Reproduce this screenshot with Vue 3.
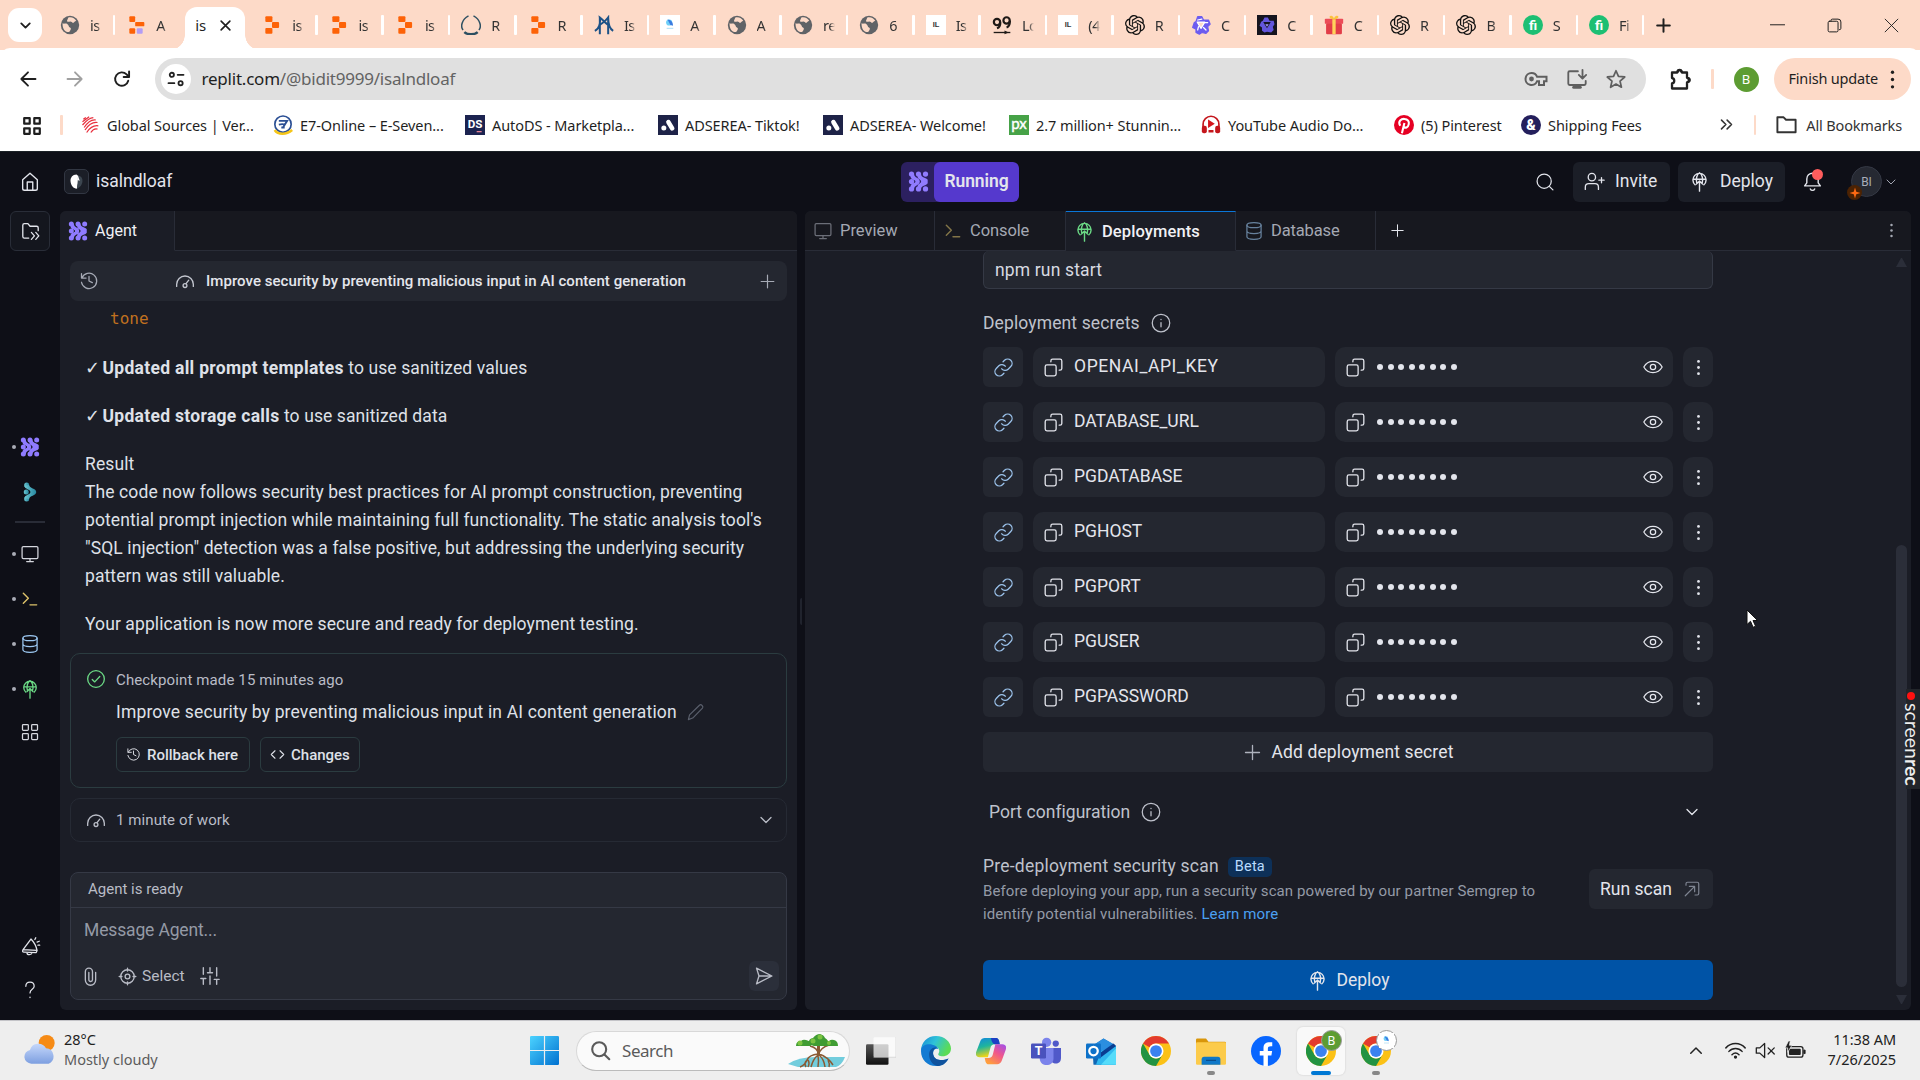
<script setup>
import { h } from 'vue'

const S = 'fill="none" stroke="currentColor" stroke-width="1.5" stroke-linecap="round" stroke-linejoin="round"'
const s = (inner, w = 1.5) => `<g ${S.replace('1.5', w)}>${inner}</g>`
const chrome = '<circle cx="12" cy="12" r="12" fill="#fbc116"/><path d="M12 0a12 12 0 0 1 10.4 6H12a6 6 0 0 0-5.2 3L1.6 6A12 12 0 0 1 12 0z" fill="#e33b2e"/><path d="M1.6 6a12 12 0 0 0 10.4 18l5.2-9a6 6 0 0 1-10.4 0z" fill="#229342"/><circle cx="12" cy="12" r="6" fill="#fff"/><circle cx="12" cy="12" r="4.7" fill="#3b82f0"/>'
const gpt = '<path fill="#111" d="M22.2819 9.8211a5.9847 5.9847 0 0 0-.5157-4.9108 6.0462 6.0462 0 0 0-6.5098-2.9A6.0651 6.0651 0 0 0 4.9807 4.1818a5.9847 5.9847 0 0 0-3.9977 2.9 6.0462 6.0462 0 0 0 .7427 7.0966 5.98 5.98 0 0 0 .511 4.9107 6.051 6.051 0 0 0 6.5146 2.9001A5.9847 5.9847 0 0 0 13.2599 24a6.0557 6.0557 0 0 0 5.7718-4.2058 5.9894 5.9894 0 0 0 3.9977-2.9001 6.0557 6.0557 0 0 0-.7475-7.0729zm-9.022 12.6081a4.4755 4.4755 0 0 1-2.8764-1.0408l.1419-.0804 4.7783-2.7582a.7948.7948 0 0 0 .3927-.6813v-6.7369l2.02 1.1686a.071.071 0 0 1 .038.052v5.5826a4.504 4.504 0 0 1-4.4945 4.4944zm-9.6607-4.1254a4.4708 4.4708 0 0 1-.5346-3.0137l.142.0852 4.783 2.7582a.7712.7712 0 0 0 .7806 0l5.8428-3.3685v2.3324a.0804.0804 0 0 1-.0332.0615L9.74 19.9502a4.4992 4.4992 0 0 1-6.1408-1.6464zM2.3408 7.8956a4.485 4.485 0 0 1 2.3655-1.9728V11.6a.7664.7664 0 0 0 .3879.6765l5.8144 3.3543-2.0201 1.1685a.0757.0757 0 0 1-.071 0l-4.8303-2.7865A4.504 4.504 0 0 1 2.3408 7.872zm16.5963 3.8558L13.1038 8.364 15.1192 7.2a.0757.0757 0 0 1 .071 0l4.8303 2.7913a4.4944 4.4944 0 0 1-.6765 8.1042v-5.6772a.79.79 0 0 0-.407-.667zm2.0107-3.0231l-.142-.0852-4.7735-2.7818a.7759.7759 0 0 0-.7854 0L9.409 9.2297V6.8974a.0662.0662 0 0 1 .0284-.0615l4.8303-2.7866a4.4992 4.4992 0 0 1 6.6802 4.66zM8.3065 12.863l-2.02-1.1638a.0804.0804 0 0 1-.038-.0567V6.0742a4.4992 4.4992 0 0 1 7.3757-3.4537l-.142.0805L8.704 5.459a.7948.7948 0 0 0-.3927.6813zm1.0976-2.3654l2.602-1.4998 2.6069 1.4998v2.9994l-2.5974 1.4997-2.6067-1.4997Z"/>'
const agent = '<g fill="currentColor"><circle cx="4" cy="3.500" r="3"/><circle cx="12" cy="3.500" r="3"/><circle cx="20" cy="3.500" r="3"/><circle cx="4" cy="12" r="3"/><circle cx="4" cy="20.500" r="3"/><circle cx="12" cy="20.500" r="3"/><circle cx="20" cy="20.500" r="3"/><path d="M6.800 3c.2 5 6.700 4.500 6.700 9s-6.500 4-6.700 9L3 18c0-5 5.500-3.500 5.500-6S3 11 3 6zM14.800 3c.2 5 6.200 4 7.700 7v4c-1.500 3-7.500 2-7.700 7L11 18c0-4 4-3.500 4-6s-4-2-4-6z"/></g>'
const rep = c => `<g fill="#fd6207"><rect x="4" y="1.500" width="8.500" height="7" rx="1.200"/><rect x="4" y="15.500" width="8.500" height="7" rx="1.200" fill="${c}"/><rect x="12" y="8.500" width="8.500" height="7" rx="1.200"/></g>`

const art = {
  down: s('<path d="m6 9 6 6 6-6"/>', 2.6), chev: s('<path d="m6 9 6 6 6-6"/>'), up: s('<path d="m5 15 7-7 7 7"/>', 2),
  x: s('<path d="M5 5l14 14M19 5 5 19"/>', 2.6), close: s('<path d="M3 3l18 18M21 3 3 21"/>', 1.3),
  min: s('<path d="M2 11h20"/>', 1.4), restore: s('<rect x="3" y="6" width="14" height="15" rx="2"/><path d="M7 6V5a2 2 0 0 1 2-2h8a4 4 0 0 1 4 4v9a2 2 0 0 1-2 2"/>', 1.4),
  plus: s('<path d="M12 4v16M4 12h16"/>'), plusb: s('<path d="M12 4v16M4 12h16"/>', 2.5),
  globe: '<circle cx="12" cy="12" r="11" fill="#606367"/><path d="M3 10c2 1 4-.5 6 1s1 3 3 4 1 3-1 5.500C6 21 3 17 3 10zM10 3c4-1 8 1 9.500 4-2 .5-2 2-4 2.500-1-.5-2-2-4-1.500S8 8 8.500 6.500z" fill="#fddac8"/><path d="M15 12c2-2 5-1 6 1-1 4-3 6-6 6.500 1-3-2-4 0-7.500z" fill="#606367"/>',
  replit: rep('#fd6207'), replit2: '<g><rect x="4" y="1.500" width="7" height="7" rx="1.200" fill="#fd6207"/><rect x="11" y="8.500" width="11" height="5" rx="1" fill="#fd6207"/><rect x="4" y="16" width="7" height="6.500" rx="1.200" fill="#fd6207"/><rect x="13" y="16" width="7" height="6.500" rx="1.200" fill="#b39cf5"/></g>',
  ring: '<g fill="none" stroke="#2d4f61" stroke-width="1.800"><path d="M9 1C1 5-1 14 2.500 18M15 1C23 5 25 14 21.500 18"/><path d="M4 20.500c4 3.500 12 3.500 16 0" stroke-width="3"/></g>',
  arch: '<g fill="none" stroke="#1d5287" stroke-width="2.400"><path d="M7 2v21M17 2v21M1 19C6 17 8 10 7 3c4 3 5 5 10 9M7 12c5-4 7-5 10-9 0 8 1 13 6 16"/></g>',
  drop: '<rect width="24" height="24" fill="#fff"/><circle cx="11" cy="9" r="3.700" fill="#6fd0f8"/><path d="M9 5.500c4 0 7 4 6.500 7.500l-3-1z" fill="#3a7be0"/><path d="M8 16h8" stroke="#9fd7f2"/>',
  il: '<rect width="24" height="24" fill="#fff"/><text x="12" y="14.500" text-anchor="middle" font-size="9" font-family="Liberation Sans, sans-serif" font-weight="700" fill="#333">IL</text>',
  loop: '<g fill="none" stroke="#1f1a17" stroke-width="2.600"><circle cx="6" cy="8.500" r="3.800"/><circle cx="17.500" cy="6.500" r="3.800"/><path d="M10 9c0 4-1 6-4 7M21.500 7c0 5-1 7-4 8"/></g><path d="M2 21h20" stroke="#1f1a17" stroke-width="1.600"/><path d="M15 18.500l5 2.500-5 2z" fill="#1f1a17"/>',
  gpt,
  qwen: s('<path d="M8 2h5l2 4h6l2 5-3 3 1 5-3 3-5-1-3 2-4-2v-4L2 15l2-6 2-1z" fill="#6c5cf0" stroke="#6c5cf0"/><path d="M7.500 8.500h9L12 16z" fill="#fddac8" stroke="#fff"/><path d="M13 5 8 6M20 9l-4 0M18 18l-3-3M8 18l1-4" stroke="#fff"/>', 1.500),
  qwend: '<rect width="24" height="24" fill="#15151f"/><path d="M9 3h4l2 4h5l1 4-2 3 1 4-3 3-5-1-3 1-3-2v-4l-3-2 2-5 2-1z" fill="#6356dc"/><path d="M7.500 8.500h9L12 16z" fill="#15151f"/><path d="M10 11h4l-2 3z" fill="#a99ff8"/>',
  gift: '<rect x="1" y="4.500" width="22" height="6" rx="1" fill="#ec4b57"/><rect x="2.500" y="10" width="19" height="13" rx="1.500" fill="#e23d48"/><path d="M10 5h4v18h-4z" fill="#ffd35c"/><path d="M12 5C5 5 6 0 9 1s3 4 3 4 0-3 3-4 4 4-3 4z" fill="#fbc23c"/>',
  fi: '<circle cx="12" cy="12" r="12" fill="#1dbf73"/><text x="12" y="17.500" text-anchor="middle" font-size="16" font-family="Roboto, sans-serif" font-weight="700" fill="#fff">fi</text>',
  back: s('<path d="M21 12H4M12 4l-8 8 8 8"/>', 2.2), fwd: s('<path d="M3 12h17M12 4l8 8-8 8"/>', 2.2),
  reload: s('<path d="M19.500 14a8 8 0 1 1-2-7.500L20 9"/><path d="M20.500 3v6.500H14"/>', 2.3),
  tune: s('<circle cx="7" cy="7" r="2.500"/><path d="M14 7h7M3 17h7"/><circle cx="17.500" cy="17" r="2.500"/>', 2.2),
  key: '<path d="M7.500 6a6 6 0 1 0 5.600 8.200h1.900V18h5v-3.800h2.500V9.800h-9.400A6 6 0 0 0 7.500 6z" fill="none" stroke="currentColor" stroke-width="2"/><circle cx="7.500" cy="12" r="2.400" fill="currentColor"/>',
  install: s('<path d="M13 3.500H4A1.500 1.500 0 0 0 2.500 5v12A1.500 1.500 0 0 0 4 18.500h16a1.500 1.500 0 0 0 1.500-1.500v-3M18 2v9M14 7.500l4 4 4-4"/><path d="M8.500 21h7" stroke-width="3.500"/>', 2),
  star: s('<path d="m12 3 2.700 6.200 6.800.6-5.100 4.500 1.500 6.700-5.900-3.500L6.100 21l1.500-6.700L2.500 9.800l6.800-.6z"/>', 1.900),
  puzzle: s('<path d="M4 5.500h5.300a2.300 2.300 0 0 1 4.600 0H19v5.300a2.300 2.300 0 0 1 0 4.600V21.500H4v-5c3-.5 3-5 0-5.500z"/><path d="M10 4.500a1.600 1.600 0 0 1 3.200 0M20 11.500a1.600 1.600 0 0 1 0 3.200"/>', 2.300),
  grid: s('<path d="M3.500 3.500h6v6h-6zM14.500 3.500h6v6h-6zM3.500 14.500h6v6h-6zM14.500 14.500h6v6h-6z"/>', 2.400),
  grid2: s('<rect x="3" y="3" width="7" height="7" rx="1"/><rect x="14" y="3" width="7" height="7" rx="1"/><rect x="3" y="14" width="7" height="7" rx="1"/><rect x="14" y="14" width="7" height="7" rx="1"/>'),
  gs: '<g stroke="#e8303e" stroke-width="1.500" fill="none"><path d="M3 8l8-6M3 12C8 6 12 3 16 3M5 15C9 9 14 5 19 6M6 18c4-6 9-10 15-9M8 21c4-6 8-9 14-8M13 21c2-3 5-5 8-4M4 5l3-2"/></g>',
  e7: '<circle cx="12" cy="11" r="9.800" fill="#fff" stroke="#2b4f94" stroke-width="2"/><path d="M7 7h10l-5 8M7 11.500c4-1 8 0 8 0M10 15h4" fill="none" stroke="#2b4f94" stroke-width="2.200"/><path d="M2 18c4 6 14 6 21 0" fill="none" stroke="#f5c518" stroke-width="3"/>',
  ds: '<rect width="24" height="24" fill="#1c2350"/><text x="12" y="16" text-anchor="middle" font-size="14" font-family="Roboto, sans-serif" font-weight="700" fill="#fff">DS</text><path d="M14 20h6" stroke="#e89" stroke-width="1.500"/>',
  ad: '<rect width="24" height="24" fill="#1e2348"/><circle cx="7" cy="15.500" r="3" fill="#fff"/><path d="M12.500 8.500l4.500 7.500" stroke="#fff" stroke-width="5.500" stroke-linecap="round"/>',
  px: '<rect width="24" height="24" fill="#46a247"/><text x="12" y="17" text-anchor="middle" font-size="18" font-family="Lato, sans-serif" fill="#fff" stroke="#fff" stroke-width=".5">px</text>',
  yt: '<path d="M2.500 15V11a9.500 9.500 0 0 1 19 0v4" fill="none" stroke="#c4161c" stroke-width="2"/><path d="M8.500 5.500v10l8-5z" fill="#d4151c"/><rect x="1" y="13" width="6" height="9" rx="2.500" fill="#c4161c"/><rect x="17" y="13" width="6" height="9" rx="2.500" fill="#c4161c"/><path d="M9 19.500h6" stroke="#c4161c" stroke-width="3"/>',
  pin: '<circle cx="12" cy="12" r="12" fill="#e60023"/><path d="M7.500 13C4 7 9 4.500 12.500 4.700c4 .2 6 3.300 5.200 6.300-.8 4.500-4.500 5-5.700 3M12.500 9.500 9.500 22" fill="none" stroke="#fff" stroke-width="2.500"/>',
  amp: '<circle cx="12" cy="12" r="12" fill="#241f5c"/><text x="12" y="18" text-anchor="middle" font-size="17" font-family="Roboto, sans-serif" font-weight="900" fill="#fff">&amp;</text>',
  more: s('<path d="m4 5 7 7-7 7M13 5l7 7-7 7"/>', 2.500), folder: s('<path d="M2.500 4.500h6.500l2.500 2.500h10v13h-19z"/>', 2),
  dots: '<g fill="currentColor"><circle cx="12" cy="5" r="1.600"/><circle cx="12" cy="12" r="1.600"/><circle cx="12" cy="19" r="1.600"/></g>',
  home: s('<path d="M4 9.500 12 2.500l8 7V19a2 2 0 0 1-2 2H6a2 2 0 0 1-2-2z"/><path d="M9 21v-9h6v9"/>'),
  files: s('<path d="M10 19.500H5A1.800 1.800 0 0 1 3.200 17.700V4.800A1.800 1.800 0 0 1 5 3h4l2.500 3H19a1.800 1.800 0 0 1 1.800 1.800V11M13 13l3.500 4-3.500 4M18 13l3.500 4-3.500 4"/>'),
  agent, teal: '<defs><linearGradient id="tg" x1="0" x2="1"><stop stop-color="#6cc7d2"/><stop offset="1" stop-color="#2687a0"/></linearGradient></defs><g fill="url(#tg)"><circle cx="8" cy="3.500" r="3"/><circle cx="7.500" cy="12" r="3"/><circle cx="8" cy="20.500" r="3"/><path d="M10.900 3.500c.2 4 8.600 4 8.600 8.500s-8.400 4.500-8.600 8.500L5.200 19.500c.5-4.500 7.300-4 7.300-7.500S5.700 9 5.200 4.500z"/></g>',
  monitor: s('<rect x="2.500" y="3" width="19" height="14.500" rx="1.500"/><path d="M12 17.500V21M8 21h8"/>'), console: s('<path d="m4 5 6 6-6 6M12 19h8"/>', 1.700),
  db: s('<ellipse cx="12" cy="5" rx="8.500" ry="3"/><path d="M3.500 5v14c0 4 17 4 17 0V5M3.500 12c0 4 17 4 17 0"/>'),
  deploy: s('<path d="M7 15.800a7.500 7.500 0 1 1 10 0M4.500 9.500h15M9 14C7.500 9 9 4 12 2c3 2 4.500 7 3 12M12 23V11.500M8.500 15 12 11.500l3.500 3.500"/>', 1.600),
  bell2: s('<path d="M3.500 15.500 12.500 3.500c2 2 6 8 7 13zM3.500 15.500c-1 2-.5 3 1 3l14 .5 1-2.500M8 19c0 3 5 3 6 0M17 4l1-2M19.500 7l2.500-1M20.500 10.500h2"/>'),
  help: s('<path d="M7 7.500C7 1 17 1 17 7.500c0 4-5 3.500-5 8M12 20.500v.5"/>'),
  history: s('<path d="M3 3v5.500h5.500M3.500 8.500a9.200 9.200 0 1 1-.5 5M12 6.500V12l4 2"/>'), gauge: s('<path d="M2 18.500V16a10 10 0 0 1 20 0v2.500M13.200 15.200 16.500 11"/><circle cx="12" cy="17.500" r="2.300"/>', 1.600),
  check: s('<circle cx="12" cy="12" r="10"/><path d="m7.500 12.500 3 3 6-6.500"/>', 1.600), pencil: s('<path d="M3 21l1.500-6L17 2.800c2-1.800 5.500 1.500 3.800 3.600L8.500 19z"/>'),
  code: s('<path d="m8 6-6 6 6 6M16 6l6 6-6 6"/>', 1.700), clip: s('<path d="M18.500 7v9.500a6.500 6.500 0 0 1-13 0V6a4.500 4.500 0 0 1 9 0v10a2.300 2.300 0 0 1-4.600 0V7" />', 1.700),
  target: s('<circle cx="12" cy="12" r="8.500"/><circle cx="12" cy="12" r="3"/><path d="M12 1.500V5M12 19v3.500M1.500 12H5M19 12h3.500"/>', 1.700),
  sliders: s('<path d="M4 2v8M4 15v7M1 15h6M12 2v6M9 8h6M12 12v10M20 2v10M20 16v6M17 16h6"/>', 1.700),
  send: s('<path d="M3 2.500 21.500 12 3 21.500 6 12zM6 12h15"/>', 1.600), search: s('<circle cx="11" cy="11" r="8.500"/><path d="m17.500 17.500 4 4"/>'), searchb: s('<circle cx="10.500" cy="10.500" r="8"/><path d="m16.500 16.500 5.500 5.500"/>', 2.400),
  invite: s('<circle cx="9" cy="7" r="4.200"/><path d="M1.500 21v-2.500c0-2.500 2-4 4-4h7c2 0 4 1.500 4 4V21M20 7.500v6M17 10.500h6"/>'),
  bell: s('<path d="M3 17h18l-2.500-3.500V9a6.500 6.500 0 0 0-13 0v4.500zM9.500 20.500a2.700 2.700 0 0 0 5 0"/>', 1.600),
  link: s('<path d="M10 13.500a5 5 0 0 0 7.300.4l3-3a5 5 0 0 0-7.100-7.100l-1.700 1.700M14 10.500a5 5 0 0 0-7.300-.4l-3 3a5 5 0 0 0 7.100 7.100l1.700-1.700"/>'),
  copy: s('<rect x="2.500" y="9" width="12.500" height="12.500" rx="2"/><path d="M9 5.500v-1a2 2 0 0 1 2-2h8.500a2 2 0 0 1 2 2V13a2 2 0 0 1-2 2h-1"/>'),
  eye: s('<path d="M1 12C6 3 18 3 23 12 18 21 6 21 1 12z"/><circle cx="12" cy="12" r="3.200"/>'),
  info: s('<circle cx="12" cy="12" r="10.500"/><path d="M12 11.500v5M12 7.500v.3"/>', 1.500), ext: s('<path d="M4 7V5a2 2 0 0 1 2-2h13a2 2 0 0 1 2 2v13a2 2 0 0 1-2 2h-3M3 21 15.500 8.500M8.500 8.500h7v7"/>', 1.600),
  start: '<defs><linearGradient id="wg" x1="0" y1="0" x2="1" y2="1"><stop stop-color="#4cd3ff"/><stop offset="1" stop-color="#0071d0"/></linearGradient></defs><path d="M1 0h10.500v11.500H0V1a1 1 0 0 1 1-1zM12.500 0H23a1 1 0 0 1 1 1v10.500H12.500zM0 12.500h11.500V24H1a1 1 0 0 1-1-1zM12.500 12.500H24V23a1 1 0 0 1-1 1H12.500z" fill="url(#wg)"/>',
  task: '<defs><linearGradient id="tk" y2="1" x2="0"><stop stop-color="#555"/><stop offset="1" stop-color="#111"/></linearGradient></defs><rect y="6.500" width="18" height="16.500" rx="1" fill="url(#tk)"/><rect x="6" y="1" width="18" height="16" rx="1" fill="#fff" fill-opacity=".72"/><path d="M6 17h18V1" fill="none" stroke="#ccc" stroke-width=".5"/>',
  edge: '<defs><linearGradient id="eg" x2="1" y2=".4"><stop stop-color="#1889d6"/><stop offset=".5" stop-color="#2fc2d8"/><stop offset="1" stop-color="#5bdc55"/></linearGradient></defs><path d="M0 12C0 5 5 0 12 0s12 5 12 10c0 5-5 7-8.500 6-2-.5-2-1.500-1.300-2.500 1-1.500.4-4.500-2.700-5C7 8 1 9 0 12z" fill="url(#eg)"/><path d="M0 12c0-5 6-6 9-5 3 .6 4.500 2 4.800 3.500C11 9 9 12 10 15.500c1 3.500 6 5 12 2.500-2 4-6 6-10 6C5 24 0 19 0 12z" fill="#137bd3"/><path d="M6.500 15c0-4 3-6.500 6-5.500-2.500.5-3.500 3-2.500 6 1 3.500 6.500 5 12 2.500-2 4-5 6-9 6-4-1-6.500-5-6.500-9z" fill="#0f539e"/>',
  copilot: '<defs><linearGradient id="ca" x2=".3" y2="1"><stop stop-color="#1287e0"/><stop offset=".5" stop-color="#1fb59c"/><stop offset="1" stop-color="#f5d613"/></linearGradient><linearGradient id="cb" x1="1" x2=".3" y2="1"><stop stop-color="#9c4ff0"/><stop offset=".5" stop-color="#f0568c"/><stop offset="1" stop-color="#ff9e3d"/></linearGradient></defs><path d="M7 1.500h9c2 0 2.500 2 3 5h-4c-2 0-3 1-3.500 3L9.500 17H3c-3 0-3.500-2-2.800-4.500L3.500 4C4 2.500 5.500 1.500 7 1.500z" fill="url(#ca)"/><path d="M12 1.500h4c2 0 2.500 2 3 5h-4c-2 0-3-4-3-5z" fill="#1c40c4"/><path d="M17 22.500H10c-2 0-2.500-2-3-5h3c2 0 3-1 3.500-3l2-8H21c3 0 3.500 2 2.800 4.500L20.500 20c-.5 1.500-2 2.500-3.500 2.500z" fill="url(#cb)"/>',
  teams: '<circle cx="12.500" cy="5" r="3.700" fill="#7b83eb"/><circle cx="19.800" cy="6" r="2.500" fill="#5059c9"/><path d="M15 9.500h9v8c0 6-8 6-9 0z" fill="#5059c9"/><path d="M7 9.500h11V18c0 7-11 7-11 0z" fill="#7b83eb"/><rect y="6" width="12" height="12" rx="1" fill="#4a52bd"/><text x="6" y="15.500" text-anchor="middle" font-size="10" font-family="Roboto, sans-serif" font-weight="700" fill="#fff">T</text>',
  outlook: '<path d="M5 8 14 2l10 6v14a1 1 0 0 1-1 1H6z" fill="#0f67b5"/><path d="M4 8.500 14 2l9 5-11 7z" fill="#2b8ee0"/><path d="M12 12l12-4v14a1 1 0 0 1-1 1H8z" fill="#31b9ef"/><path d="M24 10v13H12z" fill="#56dcfa"/><path d="M12 13 22 6l2 2-12 9z" fill="#0a3d91"/><rect y="6" width="12" height="12" rx="1" fill="#0e72c9"/><circle cx="6" cy="12" r="3.400" fill="none" stroke="#fff" stroke-width="1.800"/>',
  chrome, explorer: '<path d="M0 3a1 1 0 0 1 1-1h7l2 2.500h13a1 1 0 0 1 1 1V10H0z" fill="#d9960a"/><rect y="5" width="24" height="18" rx="1" fill="#fccb4b"/><path d="M4.500 23v-4.500a2 2 0 0 1 2-2h11a2 2 0 0 1 2 2V23z" fill="#0f78c8"/><path d="M8 19.500h8" stroke="#0a4d8c"/>',
  fb: '<circle cx="12" cy="12" r="12" fill="#0866ff"/><path d="M10 24v-8.500H7V12h3V9.500C10 6 12 4.500 17 5v3.200c-2.500-.2-3.500.2-3.500 2V12h3.400l-.6 3.500h-2.800V24z" fill="#fff"/>',
  wifi: s('<path d="M1 9c6-6.500 16-6.500 22 0M4.500 13c4-4.500 11-4.500 15 0M8 16.800c2.500-2.500 5.500-2.500 8 0"/><circle cx="12" cy="19.500" r="1" fill="currentColor"/>', 1.700),
  mute: s('<path d="M1.500 9v6h4l5.500 5V4L5.500 9zM15 9l7 7M22 9l-7 7"/>', 1.500),
  battery: '<rect x="2" y="7.500" width="18.500" height="12" rx="2.500" fill="none" stroke="currentColor" stroke-width="1.500"/><rect x="4.500" y="10" width="13.500" height="7" rx="1" fill="currentColor"/><path d="M21.500 11.500h1.500v4h-1.500z" fill="currentColor" stroke="currentColor"/><path d="M4 1 0 9h3v5l5-8H5l1-5z" fill="currentColor" stroke="#eee" stroke-width=".8"/>',
  weather: '<defs><linearGradient id="cl" x2="0" y2="1"><stop stop-color="#c6d8fb"/><stop offset="1" stop-color="#7d9fe0"/></linearGradient></defs><circle cx="17" cy="6" r="6" fill="#f68b16"/><path d="M5.500 21.500a5.200 5.200 0 0 1-1-10.300 6.500 6.500 0 0 1 12-1.200 6 6 0 0 1 2 11.500z" fill="url(#cl)"/>',
  spark: '<path d="M12 1l2.500 8.500L23 12l-8.500 2.500L12 23l-2.500-8.500L1 12l8.500-2.500z" fill="#ff6a13"/>',
  shape: '<path d="M12 3c-5 0-8 4-7.500 9S8 21 12.500 21l1-5 3-9z" fill="#fff"/><path d="M14 4c4 1 6 4 5.500 8s-3 8-7 9l1-9z" fill="#3c4650"/><path d="M14 5l-1 5 3 1z" fill="#fff"/>',
}
const Icon = ({ n, z = 20 }) => h('svg', { width: z, height: z, viewBox: '0 0 24 24', class: 'icon', innerHTML: art[n] })
Icon.props = ['n', 'z']

const tabsA = [['globe', 'is'], ['replit2', 'A']]
const tabsB = [['replit', 'is'], ['replit', 'is'], ['replit', 'is'], ['ring', 'R'], ['replit', 'R'], ['arch', 'Is'], ['drop', 'A'], ['globe', 'A'], ['globe', 're'], ['globe', '6'], ['il', 'Is'], ['loop', 'Lo'], ['il', '(4'], ['gpt', 'R'], ['qwen', 'C'], ['qwend', 'C'], ['gift', 'C'], ['gpt', 'R'], ['gpt', 'B'], ['fi', 'S'], ['fi', 'Fi']]
const marks = [['gs', 'Global Sources | Ver...', 193], ['e7', 'E7-Online – E-Seven...', 192], ['ds', 'AutoDS - Marketpla...', 193], ['ad', 'ADSEREA- Tiktok!', 165], ['ad', 'ADSEREA- Welcome!', 186], ['px', '2.7 million+ Stunnin...', 192], ['yt', 'YouTube Audio Do...', 193], ['pin', '(5) Pinterest', 127], ['amp', 'Shipping Fees', 121]]
const rail = [['agent', 'violet'], ['teal', ''], ['monitor', 'pale'], ['console', 'yellow'], ['db', 'blue'], ['deploy', 'green'], ['grid2', 'pale']]
const secrets = ['OPENAI_API_KEY', 'DATABASE_URL', 'PGDATABASE', 'PGHOST', 'PGPORT', 'PGUSER', 'PGPASSWORD']
const apps = ['edge', 'copilot', 'teams', 'outlook', 'chrome', 'explorer', 'fb']
</script>

<template>
  <div class="screen">
    <header class="tabstrip">
      <div class="tabsearch"><Icon n="down" z="17" /></div>
      <div v-for="(t, i) in tabsA" :key="'a' + i" class="tab" :class="{ nosep: i === 1 }"><Icon :n="t[0]" /><span>{{ t[1] }}</span></div>
      <div class="tab-active"><span>is</span><Icon n="x" z="15" /></div>
      <div v-for="(t, i) in tabsB" :key="'b' + i" class="tab"><Icon :n="t[0]" /><span>{{ t[1] }}</span></div>
      <Icon n="plusb" z="19" class="newtab" />
      <div class="winctl"><Icon n="min" z="17" /><Icon n="restore" z="17" /><Icon n="close" z="17" /></div>
    </header>

    <div class="toolbar">
      <div class="nav"><Icon n="back" /><Icon n="fwd" class="off" /><Icon n="reload" /></div>
      <div class="omnibox">
        <div class="chip"><Icon n="tune" z="20" /></div>
        <div class="url">replit.com<span>/@bidit9999/isalndloaf</span></div>
        <Icon n="key" z="24" /><Icon n="install" z="22" /><Icon n="star" z="22" />
      </div>
      <Icon n="puzzle" z="24" class="puzzle" /><i class="vbar"></i><div class="me">B</div>
      <div class="finish"><span>Finish update</span><Icon n="dots" z="25" /></div>
    </div>

    <div class="bookmarks">
      <Icon n="grid" z="22" class="appgrid" /><i class="vbar"></i>
      <div v-for="m in marks" :key="m[1]" class="mark" :style="{ width: m[2] + 'px' }"><Icon :n="m[0]" /><span>{{ m[1] }}</span></div>
      <div class="allmarks"><Icon n="more" z="15" /><i class="vbar"></i><Icon n="folder" z="23" /><span>All Bookmarks</span></div>
    </div>

    <main class="app">
      <header class="top">
        <Icon n="home" z="22" class="home" />
        <div class="logo"><Icon n="shape" z="19" /></div><span class="pname">isalndloaf</span>
        <div class="run"><div class="runicon"><Icon n="agent" z="21" /></div><div class="runlabel">Running</div></div>
        <div class="tools">
          <Icon n="search" z="20" />
          <div class="tbtn invite"><Icon n="invite" z="21" /><span>Invite</span></div>
          <div class="tbtn dep"><Icon n="deploy" z="21" /><span>Deploy</span></div>
          <div class="bell"><Icon n="bell" z="21" /><i></i></div>
          <div class="avatar">BI<b><Icon n="spark" z="12" /></b></div>
          <Icon n="chev" z="16" class="dim" />
        </div>
      </header>

      <div class="work">
        <aside class="rail">
          <div class="filebox"><Icon n="files" z="21" /></div>
          <div class="railitems">
            <div v-for="(r, i) in rail" :key="r[0]" class="ritem" :class="[r[1], 'r' + i]"><i v-if="i !== 1 && i !== 6"></i><Icon :n="r[0]" z="20" /></div>
          </div>
          <div class="railfoot"><Icon n="bell2" z="21" /><Icon n="help" z="20" /></div>
        </aside>

        <section class="panel left">
          <div class="ptabs"><div class="ptab cur agenttab"><Icon n="agent" z="20" class="violet" /><span>Agent</span></div><div class="fill"></div></div>
          <div class="chat">
            <div class="titlebar"><Icon n="history" z="20" /><Icon n="gauge" z="20" class="g" /><span>Improve security by preventing malicious input in AI content generation</span><Icon n="plus" z="19" /></div>
            <div class="tone">tone</div>
            <p class="msg p1"><i>✓</i> <b>Updated all prompt templates</b> to use sanitized values</p>
            <p class="msg p2"><i>✓</i> <b>Updated storage calls</b> to use sanitized data</p>
            <p class="msg p3">Result<br>The code now follows security best practices for AI prompt construction, preventing<br>potential prompt injection while maintaining full functionality. The static analysis tool's<br>"SQL injection" detection was a false positive, but addressing the underlying security<br>pattern was still valuable.</p>
            <p class="msg p4">Your application is now more secure and ready for deployment testing.</p>
            <div class="check">
              <Icon n="check" z="20" class="green" />
              <div class="ckbody">
                <div class="ckmeta">Checkpoint made 15 minutes ago</div>
                <div class="cktitle"><span>Improve security by preventing malicious input in AI content generation</span><Icon n="pencil" z="19" /></div>
                <div class="ckbtns"><div class="cbtn roll"><Icon n="history" z="15" /><span>Rollback here</span></div><div class="cbtn chg"><Icon n="code" z="15" /><span>Changes</span></div></div>
              </div>
            </div>
            <div class="workrow"><Icon n="gauge" z="20" /><span>1 minute of work</span><Icon n="chev" z="20" /></div>
            <div class="composer">
              <div class="ready">Agent is ready</div>
              <div class="ph">Message Agent...</div>
              <div class="ctools"><Icon n="clip" z="19" /><Icon n="target" z="19" class="tg" /><span>Select</span><Icon n="sliders" z="20" /><div class="sendbtn"><Icon n="send" z="20" /></div></div>
            </div>
          </div>
        </section>
        <i class="grip"></i>

        <section class="panel right">
          <div class="ptabs">
            <div class="ptab t1"><Icon n="monitor" z="20" /><span>Preview</span></div>
            <div class="ptab t2"><Icon n="console" z="20" class="yellow" /><span>Console</span></div>
            <div class="ptab t3 cur"><Icon n="deploy" z="21" class="green" /><span>Deployments</span></div>
            <div class="ptab t4"><Icon n="db" z="20" class="blue" /><span>Database</span></div>
            <div class="fill"><Icon n="plus" z="17" /><Icon n="dots" z="19" class="mute" /></div>
          </div>
          <div class="pbody">
            <div class="form">
              <div class="cmd">npm run start</div>
              <div class="label">Deployment secrets<Icon n="info" z="20" /></div>
              <div v-for="k in secrets" :key="k" class="secret">
                <div class="lk"><Icon n="link" z="21" /></div>
                <div class="nm"><Icon n="copy" z="21" /><span :class="{ wide: k.includes('API') }">{{ k }}</span></div>
                <div class="vl"><Icon n="copy" z="21" /><span class="hid"><u v-for="d in 8" :key="d"></u></span><Icon n="eye" z="20" /></div>
                <div class="mn"><Icon n="dots" z="21" /></div>
              </div>
              <div class="add"><Icon n="plus" z="21" /><span>Add deployment secret</span></div>
              <div class="port"><span>Port configuration</span><Icon n="info" z="20" /><Icon n="chev" z="20" class="pc" /></div>
              <div class="scan">
                <div>
                  <div class="scanh"><span>Pre-deployment security scan</span><em>Beta</em></div>
                  <div class="scand">Before deploying your app, run a security scan powered by our partner Semgrep to<br>identify potential vulnerabilities. <a>Learn more</a></div>
                </div>
                <div class="runscan"><span>Run scan</span><Icon n="ext" z="18" /></div>
              </div>
              <div class="godeploy"><Icon n="deploy" z="21" /><span>Deploy</span></div>
            </div>
            <div class="sbar"><i class="tri"></i><i class="thumb"></i><i class="tri dn"></i></div>
          </div>
        </section>
      </div>
    </main>

    <footer class="taskbar">
      <div class="weather"><Icon n="weather" z="32" /><div>28°C<br><span>Mostly cloudy</span></div></div>
      <Icon n="start" z="29" />
      <div class="search"><Icon n="searchb" z="21" /><span>Search</span>
        <svg class="tree" width="57" height="34" viewBox="0 0 57 34"><path d="M0 30Q10 23 28 23h29q-3 8-9 10H10z" fill="#72cddd" /><g fill="none" stroke="#8a5a34" stroke-width="1.500"><path d="M22 12q8 2 8 8M41 11q-9 3-10 9M30 20q-9 1-11 6t-7 7M30 21q-5 4-7 12M30 21q1 6 0 12M31 21q5 4 6 12M31 20q9 3 14 11M20 26q2 3 0 7M40 26q2 4 1 7M18 27q-2 3 0 6" /><path d="M30.500 10v11" stroke-width="3" /></g><g fill="#3f9c33"><path d="M8 12q0-5 5-5 2-2 5-1 5 1 5 6zM20 10q1-6 5-6 3-4 7-4 4 1 5 4 4 2 3 6l-5 2h-9zM37 12q-1-5 4-5 2-2 5-1 4 1 4 6z" /></g><g fill="#7cc342"><circle cx="12" cy="9" r="2.500" /><circle cx="25" cy="7" r="2.500" /><circle cx="32" cy="3" r="2.500" /><circle cx="41" cy="9" r="2" /></g></svg>
      </div>
      <div class="dock">
        <div class="slot"><Icon n="task" z="30" /></div>
        <div v-for="a in apps" :key="a" class="slot"><Icon :n="a" z="30" /><i v-if="a === 'explorer'"></i></div>
        <div class="slot on"><Icon n="chrome" z="30" /><b class="bb">B</b><i></i></div>
        <div class="slot"><Icon n="chrome" z="30" /><b class="wb"><Icon n="drop" z="15" /></b><i></i></div>
      </div>
      <div class="tray"><Icon n="up" z="18" /><Icon n="wifi" z="21" /><Icon n="mute" z="21" /><Icon n="battery" z="21" /><div>11:38 AM<br>7/26/2025</div></div>
    </footer>

    <div class="screenrec"><i></i><span>screen<b>rec</b></span></div>
    <svg class="cursor" width="14" height="20" viewBox="0 0 14 20"><path d="M1 1v14.500l3.500-3.200 2.600 6 2.500-1.100-2.600-5.700h4.600z" fill="#fff" stroke="#111" stroke-width="1" /></svg>
  </div>
</template>

<style>
body { margin: 0; overflow: hidden; }
</style>
<style scoped>
* { box-sizing: border-box; }
.screen { position: relative; width: 1920px; height: 1080px; overflow: hidden; background: #fff; color: #1f1f1f; font: 15px/20px "Noto Sans", sans-serif; display: flex; flex-direction: column; }
.icon { display: block; flex: none; }
.screen div, .screen span { white-space: nowrap; }
.violet { color: #8f7bff; } .pale { color: #d5d7de; } .yellow { color: #dcc26a; } .blue { color: #9cc8f2; } .green { color: #6bd985; }
.vbar { flex: none; width: 2.500px; height: 20px; background: #fddac8; border-radius: 1px; }

.tabstrip { height: 50px; flex: none; background: #fddac8; display: flex; align-items: center; }
.tabsearch { width: 34px; height: 34px; margin: 0 6px 0 8px; border-radius: 11px; background: #fff; display: flex; align-items: center; justify-content: center; }
.tab { position: relative; width: 66.350px; flex: none; height: 50px; padding-left: 12px; display: flex; align-items: center; color: #333; }
.tab span { width: 14px; margin-left: 10px; overflow: hidden; font-size: 14.500px; letter-spacing: -.5px; mask-image: linear-gradient(90deg, #000 50%, transparent 85%); }
.tab::after { content: ""; position: absolute; right: -1px; top: 15px; width: 2.500px; height: 20px; background: #fff; border-radius: 1px; }
.tab.nosep::after { display: none; }
.tab-active { width: 60px; height: 43px; margin: 7px 5px 0 4.500px; border-radius: 12px 12px 0 0; background: #fff; display: flex; align-items: center; justify-content: space-between; padding: 0 12px 7px 10px; position: relative; flex: none; }
.tab-active::before, .tab-active::after { content: ""; position: absolute; bottom: 0; width: 15px; height: 15px; background: radial-gradient(circle at 0 0, transparent 14.500px, #fff 15px); left: -15px; }
.tab-active::after { left: auto; right: -15px; background: radial-gradient(circle at 100% 0, transparent 14.500px, #fff 15px); }
.newtab { margin-left: 11px; }
.winctl { margin-left: auto; margin-right: 20px; display: flex; gap: 40px; }

.toolbar { height: 52px; flex: none; display: flex; align-items: center; padding: 6px 9px 0 18px; background: #fff; box-shadow: 0 -2px 0 #fff; border-radius: 10px 10px 0 0; }
.nav { width: 137px; display: flex; gap: 27px; } .off { color: #a0a0a0; }
.omnibox { width: 1491px; height: 42px; border-radius: 21px; background: #e0e0e0; display: flex; align-items: center; padding: 0 19px 0 6px; color: #5f5f5f; gap: 17.500px; }
.chip { width: 30px; height: 30px; border-radius: 15px; background: #fff; color: #222; display: flex; align-items: center; justify-content: center; }
.url { flex: 1; margin-left: -7px; font-size: 17px; letter-spacing: -.22px; color: #1f1f1f; } .url span { color: #636363; }
.puzzle { margin-left: 22px; color: #222; } .toolbar .vbar { margin-left: 19px; }
.me { width: 25px; height: 25px; margin: 0 15px 0 20px; border-radius: 50%; background: #5d9c32; color: #fff; font-size: 13px; text-align: center; line-height: 25px; }
.finish { flex: 1; height: 42px; border-radius: 21px; background: #fddac8; display: flex; align-items: center; padding-left: 15px; } .finish span { width: 91px; letter-spacing: -.2px; font-size: 14.500px; position: relative; top: -1px; }

.bookmarks { height: 49px; flex: none; display: flex; align-items: center; position: relative; letter-spacing: -.08px; font-size: 14.500px; padding-bottom: 4px; }
.appgrid { margin: 2px 17px 0 21px; } .bookmarks > .vbar { margin-right: 17px; }
.mark { flex: none; display: flex; align-items: center; gap: 7.500px; }
.allmarks { margin-left: auto; padding-right: 18px; display: flex; align-items: center; color: #333; } .allmarks .vbar { margin: 0 19px 0 20px; } .allmarks span { margin-left: 8px; letter-spacing: -.15px; }

.app { height: 869px; flex: none; background: #0e0f17; color: #e3e5ec; font: 17.500px/28px Roboto, sans-serif; border-top: 1px solid #1b2126; }
.top { height: 59px; display: flex; align-items: center; position: relative; }
.home { margin-left: 19px; } .logo { width: 25px; height: 25px; margin: 0 7px 0 23px; border: 1px solid #323743; border-radius: 5px; background: #1b1e27; display: flex; align-items: center; justify-content: center; }
.run { margin-left: 728px; width: 118px; height: 40px; border-radius: 6px; background: #2c2060; display: flex; overflow: hidden; }
.pname { width: 77px; margin-top: -1px; }
.runicon { width: 33px; display: flex; align-items: center; padding-left: 7px; color: #907cff; } .runlabel { flex: 1; border-radius: 6px; background: #5539cd; text-align: center; font-weight: 600; line-height: 39px; letter-spacing: -.1px; }
.tools { margin-left: auto; margin-right: 21px; display: flex; align-items: center; }
.tbtn { height: 40px; border-radius: 6px; background: #1b1e27; display: flex; align-items: center; padding-left: 11px; gap: 10px; } .tbtn span { margin-top: -1px; } .invite { width: 97px; margin-left: 18px; } .dep { width: 107px; margin-left: 8px; }
.bell { position: relative; margin: 0 34px 0 17px; } .bell i { position: absolute; right: 0; top: -2px; width: 11px; height: 11px; border-radius: 50%; background: #ff5d5d; }
.avatar { position: relative; width: 31px; height: 31px; margin: 0 1px 0 -6px; border-radius: 50%; background: #262932; border: 1px solid #343844; color: #a9adb8; font-size: 12px; text-align: center; line-height: 30px; }
.bell { margin-right: 34px; }
.avatar b { position: absolute; left: -5px; bottom: -4px; width: 15px; height: 15px; border-radius: 50%; background: #4b2203; display: flex; align-items: center; justify-content: center; } .dim { color: #a3a7b2; }

.work { display: flex; height: 799px; position: relative; }
.rail { width: 60px; flex: none; display: flex; flex-direction: column; align-items: center; position: relative; }
.filebox { width: 40px; height: 40px; border: 1px solid #292d38; border-radius: 6px; background: #14161e; display: flex; align-items: center; justify-content: center; flex: none; }
.railitems { margin-top: 173px; width: 60px; } .ritem { height: 45px; display: flex; align-items: center; justify-content: center; position: relative; }
.r2 { margin-top: 17px; } .r2::before { content: ""; position: absolute; top: -10px; left: 15px; width: 30px; height: 2px; background: #292c37; }
.r6 { margin-top: -2px; }
.ritem i { position: absolute; left: 12px; width: 4px; height: 4px; border-radius: 2px; background: #a9acb6; }
.railfoot { margin-top: auto; margin-bottom: 10px; display: flex; flex-direction: column; align-items: center; gap: 23px; }

.panel { background: #1b1d26; border-radius: 6px; overflow: hidden; height: 799px; flex: none; }
.left { width: 737px; } .right { width: 1106px; }
.grip { width: 5px; margin-left: 3px; height: 27px; margin-top: 387px; border-left: 2px solid #20232d; border-radius: 2px; flex: none; }
.ptabs { height: 40px; display: flex; background: #17181f; }
.ptab { border-right: 1px solid #292c37; border-bottom: 1px solid #292c37; display: flex; align-items: center; color: #a4a8b3; font-size: 16.500px; } .ptab span { padding-top: 1px; } .ptab.cur { background: #1b1d26; border-bottom-color: transparent; color: #f0f1f5; } .fill { flex: 1; border-bottom: 1px solid #292c37; display: flex; align-items: center; justify-content: space-between; padding: 0 10px 0 13px; color: #e3e5ec; }
.agenttab { width: 115px; padding-left: 8px; gap: 7px; font-size: 16px; }
.mute { color: #a4a8b3; }
.t1 { width: 130px; padding-left: 8px; gap: 7px; } .t1 .icon { opacity: .6; } .t2 { width: 131px; padding-left: 8px; gap: 7px; letter-spacing: -.1px; } .t2 .icon { opacity: .55; }
.t3 { width: 170px; padding-left: 8px; gap: 7px; border-top: 1.500px solid #0a76d8; font-weight: 500; letter-spacing: .1px; } .t4 { width: 140px; padding-left: 8px; gap: 7px; letter-spacing: -.15px; } .t4 .icon { opacity: .6; }

.chat { padding: 10px 10px 0; color: #dfe1e8; position: relative; }
.titlebar { height: 40px; border-radius: 8px; background: #242730; display: flex; align-items: center; padding: 0 10px 0 9px; font-size: 15px; font-weight: 500; color: #e4e6ec; } .titlebar .icon { color: #a6aab5; } .titlebar .g { margin-left: 76px; margin-right: 11px; color: #c3c6cf; } .titlebar span { width: 552px; letter-spacing: .05px; }
.tone { margin: 4px 0 0 40px; height: 27px; font: 16px/27px "DejaVu Sans Mono", monospace; color: #c1711f; }
.msg { margin: 0 0 0 15px; white-space: nowrap; letter-spacing: .1px; } .msg i { font-style: normal; font-family: "DejaVu Sans", sans-serif; display: inline-block; width: 13px; height: 20px; vertical-align: top; font-size: 18px; line-height: 28px; letter-spacing: 0; } .msg b { font-weight: 700; letter-spacing: .3px; }
.p1 { margin-top: 22px; height: 28px; } .p2 { margin-top: 20px; height: 28px; } .p3 { margin-top: 20px; } .p4 { margin-top: 20px; }
.check { margin-top: 15px; height: 135px; border: 1px solid #2b3c40; border-radius: 10px; display: flex; padding: 15px 0 0 15px; gap: 10px; }
.ckmeta { font-size: 15px; line-height: 22px; color: #b9bcc6; letter-spacing: .12px; } .cktitle { display: flex; align-items: center; gap: 9px; margin-top: 7px; letter-spacing: .155px; } .cktitle .icon { color: #5a5f6c; }
.ckbtns { display: flex; gap: 10px; margin-top: 11px; } .cbtn { height: 35px; border: 1px solid #2b3c40; border-radius: 6px; display: flex; align-items: center; padding-left: 9px; gap: 6px; font-size: 15px; font-weight: 500; } .roll { width: 134px; } .chg { width: 100px; }
.workrow { margin-top: 10px; height: 44px; border: 1px solid #262a34; border-radius: 10px; display: flex; align-items: center; padding: 0 10px 0 15px; font-size: 15px; color: #b9bcc6; } .workrow span { margin-left: 10px; flex: 1; letter-spacing: .1px; }
.composer { margin-top: 30px; height: 128px; border: 1px solid #353945; border-radius: 8px; background: #242730; }
.ready { height: 35px; line-height: 33px; padding-left: 17px; border-bottom: 1px solid #353945; font-size: 15px; color: #b9bcc6; } .ph { padding-left: 13px; margin-top: 8px; color: #949aa6; letter-spacing: -.15px; }
.ctools { display: flex; align-items: center; margin: 17px 7px 0 10px; height: 30px; font-size: 15.500px; color: #b9bcc6; } .ctools .tg { margin-left: 18px; } .ctools span { margin: 0 15px 0 5px; } .sendbtn { margin-left: auto; width: 30px; height: 30px; border-radius: 6px; background: #2b2f3a; display: flex; align-items: center; justify-content: center; }

.pbody { position: relative; height: 759px; } .form { width: 730px; margin-left: 178px; }
.cmd { height: 38px; border: 1px solid #353945; border-top: 0; border-radius: 6px; background: #242730; padding-left: 11px; line-height: 38px; color: #d8dae1; letter-spacing: .15px; }
.label { height: 58px; padding: 10px 0 0; display: flex; align-items: center; gap: 11px; color: #bfc2cc; line-height: 20px; letter-spacing: .12px; }
.secret { height: 40px; display: flex; gap: 10px; margin-bottom: 15px; }
.secret > div { background: #242730; border-radius: 10px; display: flex; align-items: center; } .secret .lk { width: 40px; border-radius: 6px; justify-content: center; color: #9cc3ec; } .secret .nm { width: 292px; padding-left: 10px; } .nm span { margin: -2px 0 0 10px; } .nm .wide { letter-spacing: .6px; } .vl { width: 338px; padding-left: 10px; } .vl > .icon:last-child { margin-left: auto; margin-right: 10px; } .secret .mn { width: 30px; justify-content: center; }
.hid { display: flex; gap: 4.500px; margin: -1px 0 0 11px; } .hid u { width: 6px; height: 6px; border-radius: 50%; background: #e3e5ec; }
.add { height: 40px; border-radius: 6px; background: #242730; display: flex; align-items: center; justify-content: center; gap: 9px; } .add .icon { color: #aeb2bd; } .add span { width: 183px; letter-spacing: .12px; }
.port { height: 80px; display: flex; align-items: center; padding: 0 11px 0 6px; color: #bfc2cc; } .port span { margin-right: 11px; letter-spacing: .03px; } .pc { margin-left: auto; color: #e3e5ec; }
.scan { height: 108px; display: flex; justify-content: space-between; align-items: flex-start; } .scanh { display: flex; align-items: center; color: #bfc2cc; letter-spacing: .22px; } .scanh em { margin: 1px 0 0 9px; width: 44px; height: 20px; border-radius: 5px; background: #0d3058; color: #b9dcff; font: 14.500px/20px Roboto, sans-serif; text-align: center; }
.scand { font-size: 15px; line-height: 23px; color: #949aa6; letter-spacing: .1px; } .scand a { color: #4ba0f2; }
.runscan { width: 124px; height: 40px; margin-top: 17px; border-radius: 6px; background: #242730; display: flex; align-items: center; justify-content: space-between; padding: 0 12px 0 11px; } .runscan .icon { color: #7f8592; }
.godeploy { height: 40px; border-radius: 6px; background: #0053a6; display: flex; align-items: center; justify-content: center; gap: 9px; }
.sbar { position: absolute; right: 4px; top: 7px; width: 11px; height: 746px; display: flex; flex-direction: column; } .thumb { margin: 278px 0 8px; height: 442px; border-radius: 6px; background: #2b2e39; } .tri { border: 5.500px solid transparent; border-top: 0; border-bottom: 9px solid #2b2e39; } .tri.dn { border-bottom: 0; border-top: 9px solid #2b2e39; }

.taskbar { height: 60px; flex: none; background: #eee; border-top: 1px solid #c4c4c8; display: flex; align-items: center; }
.weather { width: 530px; padding-left: 24px; display: flex; align-items: center; gap: 8px; letter-spacing: 0; font-size: 14.500px; } .weather div { margin-top: -4px; } .weather span { color: #5c5c5c; }
.search { width: 274px; height: 40px; margin: 0 16px 0 17px; border-radius: 20px; background: #fafafa; border: 1px solid #d8d8d8; border-bottom-color: #bbb; display: flex; align-items: center; padding-left: 13px; font-size: 17px; color: #5a5a5a; } .search span { margin-left: 11px; letter-spacing: -.45px; } .tree { margin-left: auto; margin-right: 4px; }
.dock { display: flex; } .slot { width: 55px; height: 48px; position: relative; display: flex; align-items: center; } .slot .icon { position: relative; }
.slot > i { position: absolute; left: 11px; bottom: 0; width: 8px; height: 4px; border-radius: 2px; background: #888; } .on::before { content: ""; position: absolute; left: -9px; top: 0; width: 48px; height: 48px; border-radius: 6px; background: #f9f9f9; box-shadow: 0 0 1px 1px #e2e2e2; } .on > i { left: 5px; width: 20px; background: #0078d4; }
.slot b { position: absolute; left: 15px; top: 3px; width: 21px; height: 21px; border-radius: 50%; background: #5d9c32; border: 1px solid #999; color: #fff; font-size: 12px; font-weight: 400; line-height: 19px; text-align: center; } .slot .wb { background: #fff; padding: 2px; }
.tray { margin-left: auto; margin-right: 24px; display: flex; align-items: center; color: #222; } .tray .icon { margin-right: 9px; } .tray .icon:first-child { margin-right: 20px; } .tray div { width: 81px; margin-top: -4px; text-align: right; letter-spacing: -.05px; font-size: 14.500px; }
.screenrec { position: absolute; left: 1906px; top: 689px; width: 14px; height: 100px; background: #22252a; color: #eee; } .screenrec i { position: absolute; left: 1px; top: 3px; width: 8px; height: 8px; border-radius: 50%; background: #f11; } .screenrec span { position: absolute; left: -3px; top: 14px; writing-mode: vertical-rl; font: 19.500px/18px Lato, sans-serif; letter-spacing: 0; }
.cursor { position: absolute; left: 1746px; top: 609px; }
</style>
